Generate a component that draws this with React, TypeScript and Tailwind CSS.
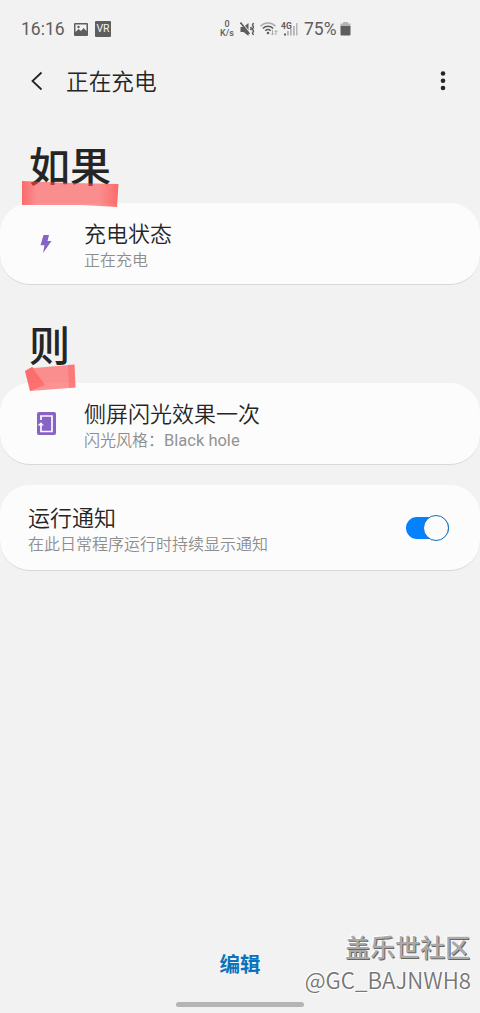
import type { ReactNode } from 'react';

type RowProps = {
  title: string;
  subtitle: ReactNode;
  icon?: ReactNode;
  action?: ReactNode;
  className?: string;
};

const ImageIcon = () => (
  <svg width="14" height="13" viewBox="0 0 14 13">
    <rect width="14" height="13" rx="1" fill="#5e5e5e" />
    <path d="M1.500 1.500h11V8L9.500 5 7 8 4.500 6 1.500 9z" fill="#f2f2f2" />
    <circle cx="4.500" cy="4" r="1.200" fill="#5e5e5e" />
  </svg>
);

const MuteIcon = () => (
  <svg width="15" height="15" viewBox="0 0 15 15" fill="none">
    <path d="M0.500 5h3l5-4v13l-5-4h-3z" fill="#5e5e5e" />
    <path d="M1.500 0.500l9 11" stroke="#f2f2f2" strokeWidth="1.200" />
    <path d="M0.500 0.500L9.500 12" stroke="#5e5e5e" strokeWidth="1.600" />
    <path
      d="M10.500 5l1 1.500-1 1.500M13.500 1l-1 2 1 2-1 2 1 2-1 2 1 2"
      stroke="#5e5e5e"
      strokeWidth="1.500"
    />
  </svg>
);

const WifiIcon = () => (
  <svg width="18" height="14" viewBox="0 0 18 14" fill="none">
    <path d="M0.500 4.200C4.500 0 11.500 0 15.500 4.200" stroke="#aaa" strokeWidth="1.400" />
    <path d="M2.800 6.500C5.800 3.500 10.200 3.500 13.200 6.500" stroke="#5e5e5e" strokeWidth="1.500" />
    <path d="M5.200 8.800c1.800-1.600 3.800-1.600 5.600 0" stroke="#5e5e5e" strokeWidth="1.500" />
    <circle cx="8" cy="11" r="1.300" fill="#5e5e5e" />
    <path
      d="M12.500 8v5M11 11.500l1.500 1.500 1.500-1.500M16 13V8.500M14.600 10L16 8.500l1.400 1.500"
      stroke="#aaa"
      strokeWidth="1"
    />
  </svg>
);

const SignalIcon = () => (
  <svg width="17" height="15" viewBox="0 0 17 15" className="overflow-visible">
    <path d="M3 11.500h2v2H3z" fill="#5e5e5e" />
    <path d="M6 9h1.800v4.500H6zM9 7h1.800v6.500H9zM12 4h1.800v9.500H12zM15 1h1.500v12.500H15z" fill="#b5b5b5" />
    <text
      x="0"
      y="6.500"
      fill="#5e5e5e"
      fontSize="8.500"
      fontWeight="700"
      fontFamily="Roboto, sans-serif"
    >
      4G
    </text>
  </svg>
);

const BatteryIcon = () => (
  <svg width="11" height="14" viewBox="0 0 11 14">
    <path d="M3 0h5v1.500h2.500v3h-10v-3H3z" fill="#b5b5b5" />
    <path d="M0.500 4h10v8.500a1 1 0 0 1-1 1h-8a1 1 0 0 1-1-1z" fill="#5e5e5e" />
  </svg>
);

const BoltIcon = () => (
  <svg width="12" height="18" viewBox="0 0 12 18">
    <path d="M3.500 0H9L7.500 6H11.500L3 18L4.500 10.200H0.500z" fill="#8763c5" />
  </svg>
);

const EdgeScreenIcon = () => (
  <svg width="19" height="23" viewBox="0 0 19 23" fill="none">
    <rect width="19" height="23" rx="2" fill="#8763c5" />
    <path d="M4 8V4h11v15.500H4V12" stroke="#fcfcfc" strokeWidth="1.700" />
    <path d="M0.500 13.500L4 10.300l3 3.200z" fill="#fcfcfc" />
  </svg>
);

const StatusBar = () => (
  <div className="flex h-[58px] items-center pl-[21px] font-[Roboto] text-[#5e5e5e]">
    <span className="w-[53px] text-[17.500px]">16:16</span>
    <ImageIcon />
    <span className="ml-[7px] flex h-4 w-4 items-center justify-center rounded-[1px] bg-[#5e5e5e] text-[10.500px] text-[#f2f2f2]">
      VR
    </span>
    <span className="ml-[108px] w-4 text-center text-[9px] leading-[9px] font-medium">
      0<br />K/s
    </span>
    <div className="ml-[5px]">
      <MuteIcon />
    </div>
    <div className="ml-[5px]">
      <WifiIcon />
    </div>
    <div className="ml-[3px]">
      <SignalIcon />
    </div>
    <span className="ml-[6px] w-[36px] text-[17.500px] whitespace-nowrap">75%</span>
    <BatteryIcon />
  </div>
);

const Header = () => (
  <div className="flex h-[46px] items-center pr-[34px] pl-[31px]">
    <svg width="12" height="20" viewBox="0 0 12 20" fill="none">
      <path d="M10.500 1.500L1.500 10l9 8.500" stroke="#252525" strokeWidth="1.800" />
    </svg>
    <h1 className="ml-[23px] pt-1 text-[22.700px] leading-8 font-[350]">正在充电</h1>
    <svg width="6" height="20" viewBox="0 0 6 20" fill="#252525" className="ml-auto">
      <circle cx="3" cy="2.500" r="2.300" />
      <circle cx="3" cy="9.800" r="2.300" />
      <circle cx="3" cy="17" r="2.300" />
    </svg>
  </div>
);

const Row = ({ title, subtitle, icon, action, className = 'h-[82px]' }: RowProps) => (
  <div
    className={`flex items-center rounded-[30px] border-b border-[#d8d8d8] bg-[#fcfcfc] pr-[31px] pl-7 ${className}`}
  >
    {icon && <div className="flex w-14 justify-start pl-[9px]">{icon}</div>}
    <div className="pt-[6px]">
      <p className="text-[22px] leading-7 font-[350]">{title}</p>
      <p className="text-[16px] leading-6 font-[350] text-[#8e8e8e]">{subtitle}</p>
    </div>
    {action && <div className="ml-auto">{action}</div>}
  </div>
);

const Toggle = () => (
  <div className="flex h-[22px] w-[43px] items-center justify-end rounded-full bg-[#0381fe]">
    <span className="h-[26px] w-[26px] shrink-0 rounded-full border border-[#1470b8] bg-[#fcfcfc]" />
  </div>
);

const App = () => (
  <div className="relative flex h-[1013px] w-[480px] flex-col overflow-hidden bg-[#f2f2f2] font-['Roboto','Noto_Sans_CJK_SC',sans-serif] text-[#252525]">
    <StatusBar />
    <Header />
    <div className="relative flex h-[99px] items-center pt-[28px] pl-[29px]">
      <h2 className="text-[41px] leading-[50px] font-medium">如果</h2>
      <svg
        width="98"
        height="28"
        viewBox="0 0 98 28"
        className="absolute top-[77px] left-[21px] z-10"
      >
        <defs>
          <linearGradient id="tape">
            <stop offset="0" stopColor="#ff3535" stopOpacity="0.720" />
            <stop offset="0.150" stopColor="#ff4a4a" stopOpacity="0.600" />
            <stop offset="0.800" stopColor="#ff4a4a" stopOpacity="0.600" />
            <stop offset="1" stopColor="#ff3535" stopOpacity="0.720" />
          </linearGradient>
        </defs>
        <path d="M1 0L50 2L97.500 3L96 26L62 24L1 24z" fill="url(#tape)" />
      </svg>
    </div>
    <Row
      title="充电状态"
      subtitle="正在充电"
      icon={
        <div className="pl-[3px]">
          <BoltIcon />
        </div>
      }
    />
    <div className="relative flex h-[98px] items-center pt-[25px] pl-[29px]">
      <h2 className="text-[41px] leading-[50px] font-medium">则</h2>
      <svg
        width="52"
        height="28"
        viewBox="0 0 52 28"
        className="absolute top-[79px] left-[24px] z-10"
      >
        <path d="M1 7L8 3L10 4L50.500 0.500L51.500 23.500L6 27z" fill="#ff4a4a" fillOpacity="0.600" />
        <path d="M1 7L8 3L21 21L6 27z" fill="#ff4040" fillOpacity="0.400" />
        <path d="M44 1L50.500 0.500L51.500 23.500L45 24z" fill="#ff4040" fillOpacity="0.250" />
      </svg>
    </div>
    <Row
      title="侧屏闪光效果一次"
      subtitle={
        <>
          闪光风格：<span className="text-[16.500px] font-normal text-[#929292]">Black hole</span>
        </>
      }
      icon={<EdgeScreenIcon />}
    />
    <Row
      title="运行通知"
      subtitle="在此日常程序运行时持续显示通知"
      action={<Toggle />}
      className="mt-5 h-[86px]"
    />
    <div className="mt-auto flex flex-col items-center">
      <button className="text-[20.500px] leading-8 font-bold text-[#0b72bd]">编辑</button>
      <div className="mt-[21px] mb-[6px] h-[5px] w-32 rounded-full bg-[#b5b5b5]" />
    </div>
    <div className="absolute right-[9px] bottom-[18px] text-right text-[#777] [text-shadow:-1px_-1px_1px_#fff,1px_1px_1px_#fff]">
      <p className="pr-px text-[25px] leading-[29px] font-medium text-[#aaa] [text-shadow:1px_1px_0_#666,-1px_-1px_1px_#fff]">
        盖乐世社区
      </p>
      <p className="font-['Noto_Sans_CJK_SC',sans-serif] text-[22.300px] leading-[32px] font-[350]">
        @GC_BAJNWH8
      </p>
    </div>
  </div>
);

export default App;
